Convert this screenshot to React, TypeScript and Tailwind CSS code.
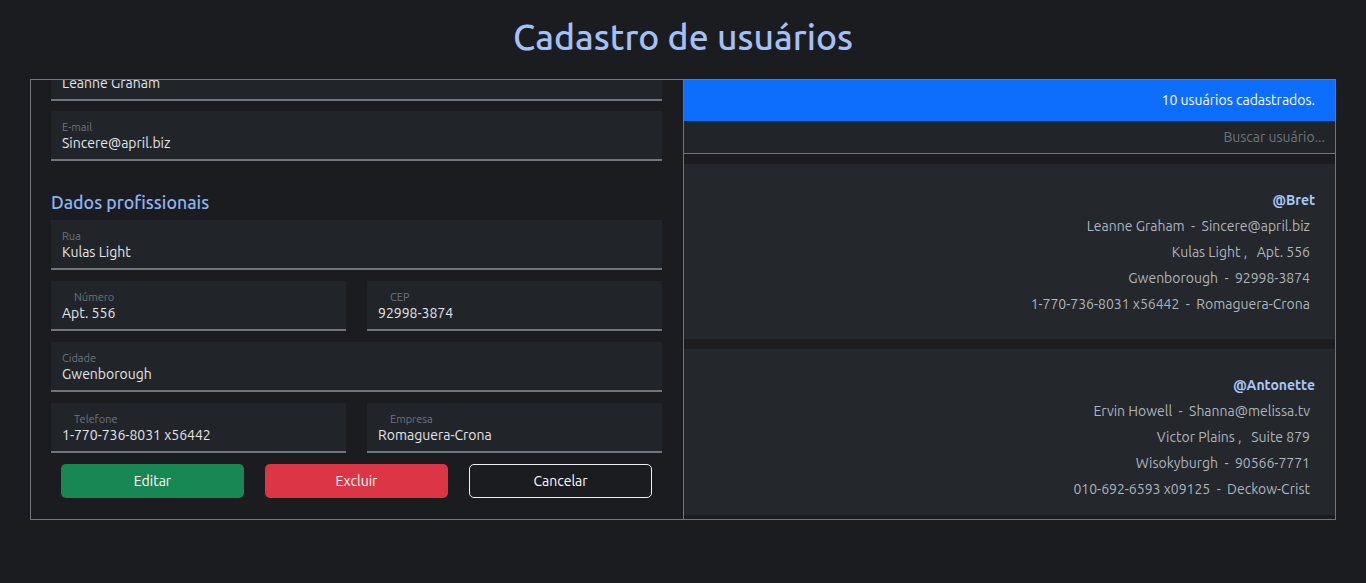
import React from "react";

const font = "font-['Ubuntu','Noto_Sans',sans-serif]";

function Field({ label, value, indent = false }: { label: string; value: string; indent?: boolean }) {
  return (
    <div className="h-[50px] bg-[#212529] border-b-2 border-[#70757c] pt-[9px] pl-[11px]">
      <div className={`text-[11px] leading-[14px] text-[#6c757d] ${indent ? "pl-[12px]" : ""}`}>{label}</div>
      <div className="text-[14px] leading-[18px] text-[#e3e6ea]">{value}</div>
    </div>
  );
}

function Card({ user, lines }: { user: string; lines: string[] }) {
  return (
    <div className="shrink-0 bg-[#24272b] pt-[26px] pb-[22px] text-right">
      <div className="pr-[20px] text-[14px] leading-[20px] font-bold text-[#a9c6f9]">{user}</div>
      <div className="mt-[3px] pr-[25px]">
        {lines.map((l, i) => (
          <div key={i} className="whitespace-pre text-[14px] leading-[26px] text-[#adb5bd]">
            {l}
          </div>
        ))}
      </div>
    </div>
  );
}

export default function App() {
  return (
    <div className={`min-h-[583px] bg-[#1b1c20] ${font}`}>
      <h1 className="pt-[15px] text-center text-[35.6px] leading-[44px] font-medium text-[#a3c1f5]">Cadastro de usuários</h1>
      <div className="mx-[30px] mt-[20px] flex h-[441px] border border-[#70757c]">
        <div className="w-[652px] shrink-0 overflow-hidden pl-[20px] pr-[21px]">
          <div className="-mt-[29px]">
            <Field label="Nome" value="Leanne Graham" />
            <div className="mt-[10px]">
              <Field label="E-mail" value="Sincere@april.biz" />
            </div>
            <h2 className="mt-[30px] mb-[7px] text-[17.8px] leading-[22px] font-medium text-[#8db5f2]">Dados profissionais</h2>
            <Field label="Rua" value="Kulas Light" />
            <div className="mt-[11px] grid grid-cols-2 gap-x-[21px]">
              <Field label="Número" value="Apt. 556" indent />
              <Field label="CEP" value="92998-3874" indent />
            </div>
            <div className="mt-[11px]">
              <Field label="Cidade" value="Gwenborough" />
            </div>
            <div className="mt-[11px] grid grid-cols-2 gap-x-[21px]">
              <Field label="Telefone" value="1-770-736-8031 x56442" indent />
              <Field label="Empresa" value="Romaguera-Crona" indent />
            </div>
            <div className="mt-[11px] grid grid-cols-3 gap-x-[21px] px-[10px]">
              <button className="h-[34px] rounded-[5px] bg-[#198754] text-[14px] text-white">Editar</button>
              <button className="h-[34px] rounded-[5px] bg-[#dc3545] text-[14px] text-white">Excluir</button>
              <button className="h-[34px] rounded-[5px] border border-[#f0f0f0] text-[14px] text-white">Cancelar</button>
            </div>
          </div>
        </div>
        <div className="flex min-w-0 flex-1 flex-col border-l border-[#70757c]">
          <div className="flex h-[41px] shrink-0 items-center justify-end bg-[#0d6efd] pr-[20px] text-[14px] text-white">
            10 usuários cadastrados.
          </div>
          <div className="flex h-[33px] shrink-0 items-center justify-end border-b border-[#70757c] bg-[#212529] pr-[10px] text-[14px] text-[#6c757d]">
            Buscar usuário...
          </div>
          <div className="min-h-0 flex-1 pt-[10px] pb-[4px]">
            <div className="flex h-full flex-col gap-[10px] overflow-hidden">
              <Card
                user="@Bret"
                lines={[
                  "Leanne Graham  -  Sincere@april.biz",
                  "Kulas Light ,   Apt. 556",
                  "Gwenborough  -  92998-3874",
                  "1-770-736-8031 x56442  -  Romaguera-Crona",
                ]}
              />
              <Card
                user="@Antonette"
                lines={[
                  "Ervin Howell  -  Shanna@melissa.tv",
                  "Victor Plains ,   Suite 879",
                  "Wisokyburgh  -  90566-7771",
                  "010-692-6593 x09125  -  Deckow-Crist",
                ]}
              />
            </div>
          </div>
        </div>
      </div>
    </div>
  );
}
